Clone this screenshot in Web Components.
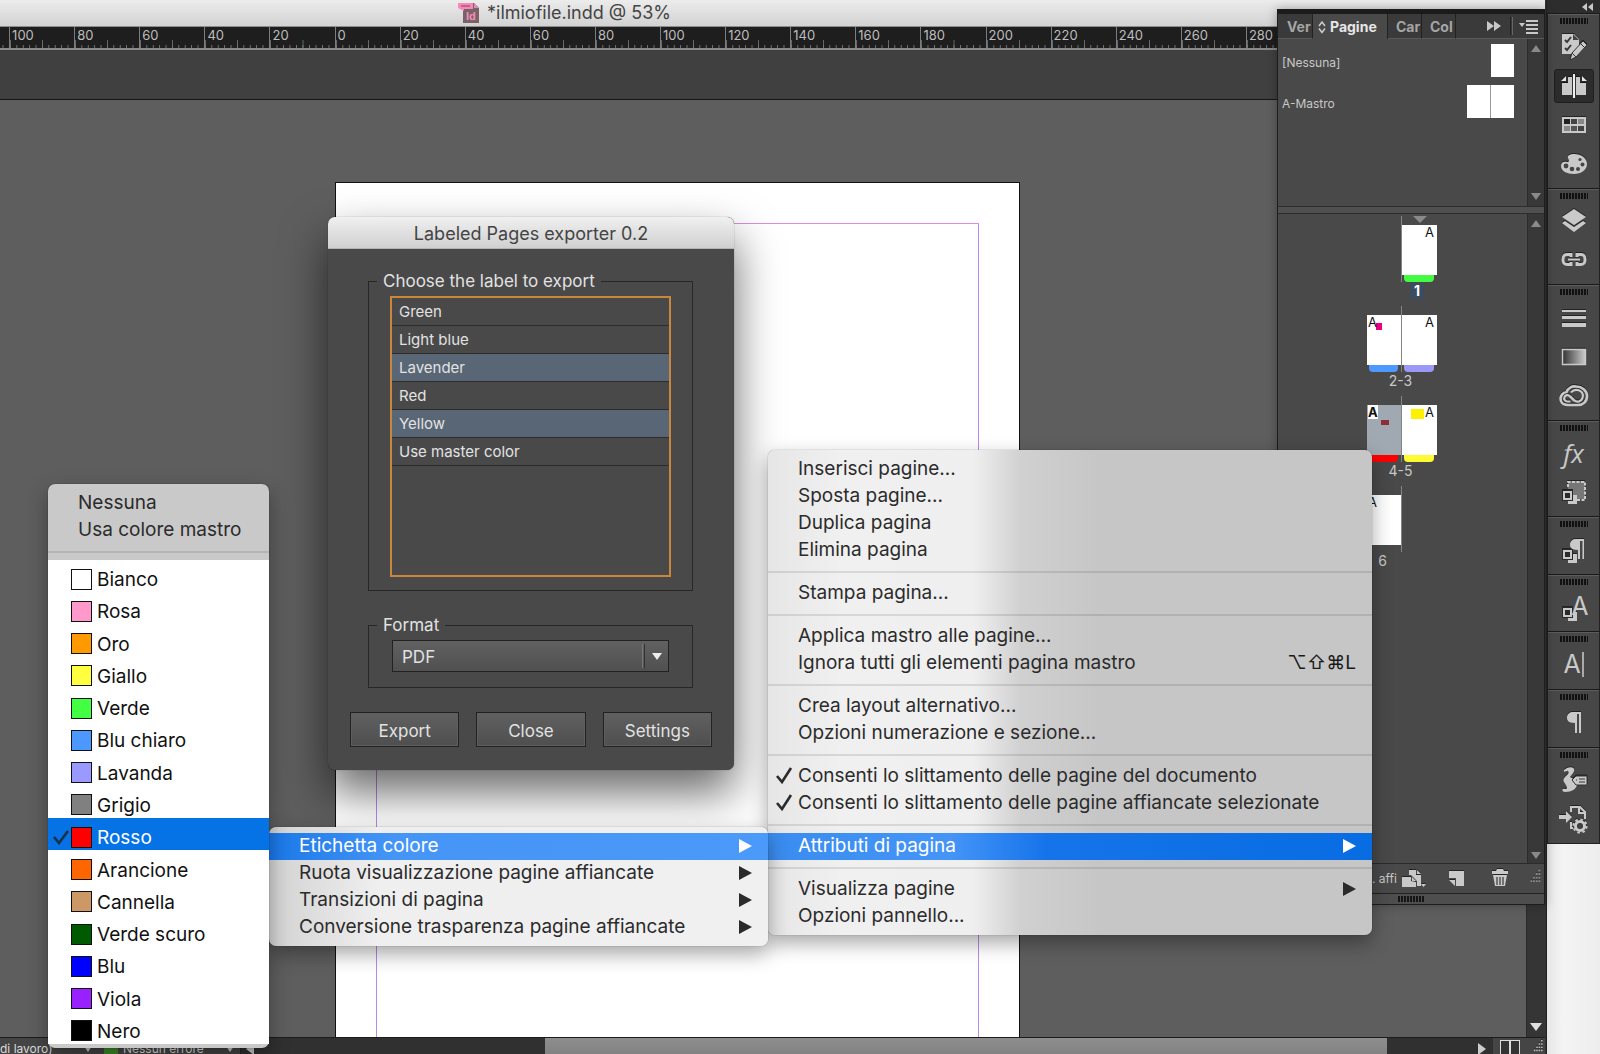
<!DOCTYPE html>
<html lang="it">
<head>
<meta charset="utf-8">
<title>ilmiofile.indd</title>
<style>
html,body{margin:0;height:100%;overflow:hidden;background:#5e5e5e}
body{font-family:Inter,"Liberation Sans",sans-serif}
</style>
</head>
<body>
<app-shell></app-shell>
<script>
const define = (name, html, init) => {
  const t = document.createElement('template');
  t.innerHTML = html;
  customElements.define(name, class extends HTMLElement {
    connectedCallback() {
      if (this.shadowRoot) return;
      this.attachShadow({mode: 'open'}).append(t.content.cloneNode(true));
      if (init) init(this, this.shadowRoot);
    }
  });
};

/* ---------- icons ---------- */
const G = 'fill="#c9c9c9"', S = 'fill="none" stroke="#c9c9c9"';
const linked = (x, y) => `<path ${G} d="M${x + 5} ${y + 4}h9v9h-9z"/><path fill="#2a2a2a" d="M${x - 1} ${y - 1}h11v11h-11z"/><path ${S} stroke-width="2" d="M${x + 1} ${y + 1}h7v7h-7z"/>`;
const ICONS = {
  preflight: `<path ${G} d="M3 2h12l5 5v15H3z"/><path fill="#444" d="M14 2v6h6z"/><path fill="none" stroke="#3a3a3a" stroke-width="2" d="M6 8l2 2 4-5M6 16l2 2 4-5"/><path ${G} stroke="#333" d="M24 9l4 4-11 12-6 3 2-7z"/><path stroke="#333" d="M22 12l4 4M13 21l4 4"/>`,
  pages: `<path ${G} d="M9 6h5v18H3V12h6zM21 6h-5v18h11V12h-6z"/><path fill="#e6e6e6" d="M7 5v5H2zM23 5v5h5z"/><path stroke="#333" stroke-width="4" d="M15 4v23"/><path stroke="#eee" stroke-width="2" d="M15 3v24"/>`,
  swatches: `<path ${G} d="M3 7h24v16H3z"/><path fill="#222" d="M5 9h6v5H5z"/><path fill="#444" d="M12 9h6v5h-6zM19 16h6v5h-6z"/><path fill="#888" d="M19 9h6v5h-6zM5 16h6v5H5z"/><path fill="#555" d="M12 16h6v5h-6z"/>`,
  color: `<path ${G} d="M15 5c7 0 13 4 13 10s-6 10-13 10S2 22 2 17c0-4 3-5 6-4 3 0 2-2 1-4-1-3 3-4 6-4z"/><g fill="#444"><circle cx="7" cy="17" r="2.4"/><circle cx="13" cy="20" r="2.3"/><circle cx="19" cy="20" r="2"/><circle cx="23.500" cy="15.500" r="2"/><circle cx="21" cy="10.500" r="1.600"/></g>`,
  layers: `<path ${G} d="M15 3l12 8-12 8-12-8z"/><path ${G} d="M3 17l3-2 9 6 9-6 3 2-12 9z"/>`,
  links: `<path ${S} stroke-width="3" d="M12 12v-2.500H8.500c-4 0-4.500 2-4.500 5s.5 5 4.500 5H12V17M18 12v-2.500h3.500c4 0 4.500 2 4.500 5s-.5 5-4.500 5H18V17"/><path ${S} stroke-width="2" d="M9 14.500h12"/>`,
  stroke: `<path ${G} d="M3 7h24v2H3zM3 13h24v3H3zM3 20h24v4H3z"/>`,
  gradient: `<defs><linearGradient id="g"><stop offset="0" stop-color="#333"/><stop offset="1" stop-color="#ccc"/></linearGradient></defs><path fill="url(#g)" stroke="#c9c9c9" stroke-width="1.500" d="M3.500 7.500h23v15h-23z"/>`,
  cc: `<path ${S} stroke-width="2.600" d="M9 24C3 24 1.500 20 1.500 17.500S4 11 7.500 11C9 7 13 5 17 5.500c6 0 11 4 11 9.500S24 24 19 24z"/><path ${S} stroke-width="2.200" d="M15.500 20l-5-5c-1.500-1.500-4-1-5 1s.5 4.500 3 4.500h3M12 11.500c2-3 7-3.500 10-1s2.500 8-2 10c-2 .5-3.500 0-5-1.500L11 15"/>`,
  object: `<path fill="#777" d="M9 4h17v18H14V12H9z"/><path ${S} stroke-width="2" stroke-dasharray="3 1.500" d="M9 10V5h17v18H15"/>${linked(4, 14)}`,
  parastyle: `<path ${G} d="M25 4v20h-1.600V6H21v18h-2V15c-7 0-8-3-8-5.500C11 6 14 4 17 4z"/>${linked(4, 15)}`,
  charbox: `${linked(4, 16)}`,
  para: `<path ${G} d="M22 5v21h-2V7h-2v19h-2V16c-7 0-8-3-8-5.500C8 7 11 5 14 5z"/>`,
  scripts: `<path ${G} d="M8 3c6-2 9 1 6 5l-3 4c4 3 8 2 7 8-1 4-5 7-12 7-4-1-3-4 0-3 4 0 1-4-1-7-3-5 7-7 4-11-1-1-5 3-4-1z"/><path ${G} stroke="#333" d="M13 15l4-4h11v9H17z"/><path stroke="#333" d="M20 14h6M20 17h6M17 15h1"/>`,
  data: `<path ${S} stroke-width="2" d="M12 8V3h9l5 5v7M12 18v6h2M20 3v6h6"/><path ${G} d="M0 11h7V7l6 6-6 6v-4H0z"/><circle cx="21" cy="22" r="4.500" fill="#333" stroke="#c9c9c9" stroke-width="3"/><circle cx="21" cy="22" r="6.600" fill="none" stroke="#c9c9c9" stroke-width="2" stroke-dasharray="2.600"/><circle cx="21" cy="22" r="2" fill="#444"/>`,
  grip: `<g fill="#b5b5b5"><path d="M25 5h2v2h-2zM22 9h2v2h-2zM25 9h2v2h-2zM19 13h2v2h-2zM22 13h2v2h-2zM25 13h2v2h-2zM16 17h2v2h-2zM19 17h2v2h-2zM22 17h2v2h-2zM25 17h2v2h-2z"/></g>`,
  pagesize: `<path ${G} d="M3 13h9v4l5 1v5H3zM10 6h7v5h5v11h-4v-5l-6-6h-2z"/><path ${G} d="M18 6l4 4h-4zM22 20h5l-2.500 3z"/><path ${G} d="M13 13l4 4h-4z"/>`,
  newpage: `<path ${G} d="M7 7h15v15h-8v-8H7z"/><path ${G} d="M7 16h6v6z"/>`,
  trash: `<path ${G} d="M11 7l1-2h6l1 2h4v3H7V7zM8 11h14l-2 11H10z"/><path stroke="#444" stroke-width="1.300" d="M12 13v8M15 13v8M18 13v8"/>`
};
customElements.define('ui-icon', class extends HTMLElement {
  connectedCallback() {
    if (this.shadowRoot) return;
    const n = this.getAttribute('name');
    this.attachShadow({mode: 'open'}).innerHTML =
      `<style>:host{display:block;width:30px;height:30px}svg{display:block;width:100%;height:100%;filter:drop-shadow(0 -1px 0 rgba(0,0,0,.5))}</style><svg viewBox="0 0 30 30" aria-hidden="true">${ICONS[n]}</svg>`;
  }
});

/* ---------- document window ---------- */
define('title-bar', `<style>
:host{display:flex;align-items:center;gap:7px;height:26px;padding-left:458px;border-bottom:1px solid #8d8d8d;background:linear-gradient(#ececec,#d2d2d2);color:#444;font-size:18px;line-height:24px}
svg{width:22px;height:24px;display:block}
text{font:bold 11px "Liberation Sans",sans-serif}
</style><svg viewBox="0 0 22 24" aria-hidden="true"><path fill="#7b6268" d="M5 2h11l5 5v15H5z"/><path fill="#d98fb0" d="M16 2l5 5h-5z"/><path fill="#f787b7" d="M0 2h15v6H6v2L0 7z"/><path fill="#c65f8b" d="M3 4h9v2H3z"/><text x="8" y="19" fill="#f58fbc">Id</text></svg><span><slot></slot></span>`);

define('ruler-bar', `<style>
:host{display:block;height:21px;overflow:hidden;background:#1e1e1e;border-bottom:2px solid #8a8a8a}
.scale{display:grid;grid-template-columns:repeat(21,1fr);width:1367px;height:21px;margin-left:-56px}
.scale span{border-left:1px solid #7c7c7c;padding-left:2px;font:13px/17px Inter,sans-serif;color:#bdbdbd;
background:linear-gradient(90deg,#777 1px,transparent 1px) 0 100%/10% 3px repeat-x,linear-gradient(90deg,#666 1px,transparent 1px) 0 100%/50% 8px repeat-x}
</style><div class="scale"></div>`, (el, r) => {
  const s = r.querySelector('.scale');
  for (let i = -6; i <= 14; i++) {
    const c = document.createElement('span');
    if (i > -6) c.textContent = Math.abs(i * 20);
    s.append(c);
  }
});

define('page-canvas', `<style>
:host{display:flex;min-height:0;background:#5e5e5e}
.board{flex:1;min-width:0;display:flex;padding:82px 0 0 335px}
.page{box-sizing:border-box;width:685px;background:#fff;border:1px solid #111;border-bottom:0;display:flex;padding:40px 40px 0}
.guide{flex:1;border:1px solid #b98be6;border-top-color:#df8be0;border-bottom:0}
.scroll{width:19px;border-left:1px solid #2a2a2a;background:#353535;display:flex;align-items:flex-end;justify-content:center;padding-bottom:6px;box-sizing:border-box}
.scroll i{border:6px solid transparent;border-top:8px solid #e0e0e0;border-bottom:0}
</style><div class="board"><div class="page"><div class="guide"></div></div></div><div class="scroll"><i></i></div>`);

define('status-bar', `<style>
:host{display:block;height:16px;overflow:hidden;background:#454545;border-top:1px solid #1c1c1c;font-size:12px;line-height:12px;color:#dcdcdc}
.row{display:flex;height:22px;align-items:center}
.info{width:241px;display:flex;align-items:center;box-sizing:border-box;border-right:1px solid #222;white-space:nowrap;height:22px}
.info span:first-child{width:84px}
.dn{border:4px solid transparent;border-top:6px solid #ccc;border-bottom:0}
.sq{width:14px;height:14px;margin:0 5px 0 12px;background:#3f8a2a}
.info .dn:last-child{margin-left:22px}
.track{flex:1;display:flex;height:22px;background:#303030;align-items:center}
.lt{border:6px solid transparent;border-right:8px solid #ccc;border-left:0;margin-left:5px}
.thumb{flex:1;height:22px;margin:0 0 0 291px;background:linear-gradient(#8e8e8e,#7e7e7e)}
.end{width:106px;display:flex;justify-content:flex-end}
.rt{border:6px solid transparent;border-left:8px solid #ccc;border-right:0;margin-right:7px}
.split{display:flex;width:52px;height:22px;background:#454545;align-items:flex-start}
.split b{width:8px;height:20px;border:1px solid #ddd;margin-top:2px;background:#333}
.split b:first-child{margin-left:7px}
ui-icon{margin:-2px 0 0 1px;width:24px;height:24px}
</style><div class="row"><div class="info"><span>di lavoro)</span><i class="dn"></i><i class="sq"></i><span>Nessun errore</span><i class="dn"></i></div><div class="track"><i class="lt"></i><div class="thumb"></div><div class="end"><i class="rt"></i></div></div><div class="split"><b></b><b></b><ui-icon name="grip"></ui-icon></div></div>`);

/* ---------- pages panel ---------- */
define('page-thumb', `<style>
:host{display:flex;flex-direction:column;font:13px/15px Inter,sans-serif;color:#111}
.sheet{height:50px;background:#fff;padding:0 3px;display:flex;justify-content:flex-end;box-sizing:border-box;position:relative}
:host([side=left]) .sheet{justify-content:flex-start;padding:0 1px}
:host([on]) .sheet{background:#a0a8b1;font-weight:bold}
:host([on]) .a{background:#fff;height:14px}
.bar{height:7px;margin:0 3px 0 2px;border-radius:0 0 4px 4px;background:var(--c,transparent)}
.art{position:absolute;display:none}
:host([art]) .art{display:block;background:var(--art);left:var(--ax);top:var(--ay);width:var(--aw);height:var(--ah)}
.a{position:relative}
</style><div class="sheet"><i class="art"></i><span class="a">A</span></div><div class="bar"></div>`);

define('page-spread', `<style>
:host{display:grid;grid-template-columns:34px 1px 35px;height:90px;grid-template-rows:9px 57px 24px;color:#c8c8c8;font:14px/17px Inter,sans-serif}
.spine{grid-area:1/2/3/3;background:#858585}
.l{grid-area:2/1}.r{grid-area:2/3}
.n{grid-area:3/1/4/4;text-align:center;padding-right:3px}
:host([only=right]) .n{grid-column:3;padding:0}
:host([only=left]) .n{grid-column:1}
:host([current]) .n{justify-self:start;text-align:center;margin-left:8px;align-self:start;margin-top:1px;width:14px;line-height:16px;font-weight:bold;font-size:14px;color:#fff;background:#3d4b61}
.mark{display:none;grid-area:1/3;justify-self:center;border:7px solid transparent;border-top:7px solid #8a8a8a;border-bottom:0;height:0}
:host([current]) .mark{display:block}
</style><i class="spine"></i><i class="mark"></i><div class="l"><slot name="l"></slot></div><div class="r"><slot name="r"></slot></div><div class="n"><slot></slot></div>`);

define('pages-panel', `<style>
:host{display:flex;flex-direction:column;box-sizing:border-box;width:268px;height:896px;background:#494949;border:1px solid #1d1d1d;border-top:5px solid #1b1b1b;box-shadow:0 0 10px rgba(0,0,0,.3);color:#c8c8c8}
*{box-sizing:border-box}
button{font:inherit;color:inherit;background:none;border:0;padding:0;margin:0}
.tabs{display:flex;height:25px;background:#3a3a3a;font-weight:bold;font-size:14px;color:#a5a5a5}
.tabs button{border-right:1px solid #222;border-bottom:1px solid #5a5a5a;text-align:left;overflow:hidden}
.v{width:35px;padding-left:9px}.c{width:34px;padding-left:8px}
.tabs .on{width:75px;background:#494949;border-bottom:0;color:#e6e6e6;display:flex;align-items:center;gap:4px;padding-left:5px}
.more{flex:1;border-bottom:1px solid #5a5a5a;display:flex;align-items:center;justify-content:flex-end;padding-right:5px}
.masters{display:flex;height:167px}
.body{flex:1;min-width:0}
.masters .body{padding-top:1px}
.m{display:flex;justify-content:space-between;align-items:center;height:41px;padding:0 13px 0 4px;font-size:12px}
.m span{padding-top:3px}
.m div{display:flex;gap:1px;background:#999}
.m i{display:block;width:23px;height:33px;background:#fff}
.sb{width:17px;background:#383838;border-left:1px solid #2c2c2c;display:flex;flex-direction:column;justify-content:space-between;align-items:center;padding:6px 0}
.pages .sb{padding-bottom:4px}
.up,.dn{border:5px solid transparent}
.up{border-bottom:7px solid #8a8a8a;border-top:0}.dn{border-top:7px solid #8a8a8a;border-bottom:0}
.split{height:8px;background:#505050;border-top:1px solid #2d2d2d;border-bottom:1px solid #2d2d2d}
.pages{display:flex;flex:1}
.list{display:flex;flex-direction:column;padding:2px 0 0 89px}
.foot{display:flex;align-items:center;height:30px;border-top:1px solid #2b2b2b;padding-left:94px;font-size:12px;white-space:nowrap}
.foot .t{width:27px}
.foot button{margin-right:13px}
.foot ui-icon[name=grip]{margin-left:-12px;opacity:.6;width:27px;height:27px}
.grip{height:11px;border-top:1px solid #222;background:#4e4e4e;display:flex;justify-content:center;align-items:center}
.grip i{width:27px;height:6px;background:repeating-linear-gradient(90deg,#151515 0 2px,#4e4e4e 2px 3px)}
</style>
<div class="tabs"><button class="v">Ver</button><button class="on"><svg width="8" height="14" viewBox="0 0 8 14" fill="none" stroke="#ccc" stroke-width="1.500" aria-hidden="true"><path d="M1 6l3-4 3 4M1 8.500l3 4 3-4"/></svg>Pagine</button><button class="c">Car</button><button class="c">Col</button>
<div class="more"><svg width="52" height="18" viewBox="0 0 52 18" aria-hidden="true"><path fill="#c9c9c9" d="M0 4l7 5-7 5zM7 4l7 5-7 5z"/><path stroke="#222" d="M23.500 0v18"/><path stroke="#666" d="M25.500 0v18"/><path fill="#c9c9c9" d="M32 6h6l-3 4zM39 3h12v2H39zM39 7h12v2H39zM39 11h12v2H39zM39 15h12v2H39z"/></svg></div></div>
<div class="masters"><div class="body"><div class="m"><span>[Nessuna]</span><div><i></i></div></div><div class="m"><span>A-Mastro</span><div><i></i><i></i></div></div></div><div class="sb"><i class="up"></i><i class="dn"></i></div></div>
<div class="split"></div>
<div class="pages"><div class="body"><div class="list">
<page-spread only="right" current><page-thumb slot="r" style="--c:#44fb44"></page-thumb>1</page-spread>
<page-spread><page-thumb slot="l" side="left" art style="--c:#4d99ff;--art:#e6007e;--ax:9px;--ay:8px;--aw:6px;--ah:7px"></page-thumb><page-thumb slot="r" style="--c:#9c98f8"></page-thumb>2-3</page-spread>
<page-spread><page-thumb slot="l" side="left" on art style="--c:#fb0000;--art:#8d2f36;--ax:14px;--ay:15px;--aw:8px;--ah:5px"></page-thumb><page-thumb slot="r" art style="--c:#fffb33;--art:#fff000;--ax:9px;--ay:4px;--aw:13px;--ah:10px"></page-thumb>4-5</page-spread>
<page-spread only="left"><page-thumb slot="l" side="left"></page-thumb>6</page-spread>
</div></div><div class="sb"><i class="up"></i><i class="dn"></i></div></div>
<div class="foot"><span class="t">. affi</span><button aria-label="Modifica dimensioni pagina"><ui-icon name="pagesize"></ui-icon></button><button aria-label="Nuova pagina"><ui-icon name="newpage"></ui-icon></button><button aria-label="Elimina pagina"><ui-icon name="trash"></ui-icon></button><ui-icon name="grip"></ui-icon></div>
<div class="grip"><i></i></div>`);

/* ---------- icon dock ---------- */
define('dock-group', `<style>
:host{display:block;flex:1 1 auto;border:1px solid #222;border-top-color:#1a1a1a;border-bottom:0;background:#474747;box-shadow:inset 0 1px 0 #5c5c5c;padding-bottom:4px;box-sizing:border-box}
.grip{width:28px;height:6px;margin:4px auto 3px;background:repeating-linear-gradient(90deg,#111 0 2px,#474747 2px 3px)}
</style><div class="grip"></div><slot></slot>`);
define('dock-button', `<style>
:host{display:flex;height:39px;align-items:center;justify-content:center}
button{width:40px;height:34px;padding:0;border:1px solid transparent;border-radius:3px;background:none;display:flex;align-items:center;justify-content:center;color:#c9c9c9;font:28px/30px Inter,sans-serif}
:host([on]) button{background:#2c2c2c;border-color:#1f1f1f}
::slotted(em){font:italic 26px/26px "Open Sans",sans-serif}
</style><button><slot></slot></button>`, (el, r) => r.querySelector('button').setAttribute('aria-label', el.getAttribute('label')));
define('icon-dock', `<style>
:host{display:flex;flex-direction:column;background:linear-gradient(90deg,#e6e6e6,#f4f4f4 30%,#ededed);border-left:1px solid #222;box-sizing:border-box}
.head{height:13px;background:#2d2d2d;display:flex;justify-content:flex-end;align-items:center;padding-right:6px}
.groups{display:flex;flex-direction:column;min-height:830px;border-bottom:1px solid #222}
.st{position:relative;display:block;width:30px;height:30px}
.st b{position:absolute;right:0;top:1px;font:25px/26px Inter,sans-serif}
.cur{border-right:2px solid #aaa;font:25px/25px Inter,sans-serif;padding-right:1px}
</style><div class="head"><svg width="12" height="8" viewBox="0 0 12 8" fill="#c9c9c9" aria-hidden="true"><path d="M5 0v8L0 4zM11 0v8L6 4z"/></svg></div>
<div class="groups">
<dock-group><dock-button label="Verifica preliminare"><ui-icon name="preflight"></ui-icon></dock-button><dock-button label="Pagine" on><ui-icon name="pages"></ui-icon></dock-button><dock-button label="Campioni"><ui-icon name="swatches"></ui-icon></dock-button><dock-button label="Colore"><ui-icon name="color"></ui-icon></dock-button></dock-group>
<dock-group><dock-button label="Livelli"><ui-icon name="layers"></ui-icon></dock-button><dock-button label="Collegamenti"><ui-icon name="links"></ui-icon></dock-button></dock-group>
<dock-group><dock-button label="Traccia"><ui-icon name="stroke"></ui-icon></dock-button><dock-button label="Sfumatura"><ui-icon name="gradient"></ui-icon></dock-button><dock-button label="Librerie"><ui-icon name="cc"></ui-icon></dock-button></dock-group>
<dock-group><dock-button label="Effetti"><em>fx</em></dock-button><dock-button label="Stili oggetto"><ui-icon name="object"></ui-icon></dock-button></dock-group>
<dock-group><dock-button label="Stili di paragrafo"><ui-icon name="parastyle"></ui-icon></dock-button></dock-group>
<dock-group><dock-button label="Stili di carattere"><span class="st"><ui-icon name="charbox"></ui-icon><b>A</b></span></dock-button></dock-group>
<dock-group><dock-button label="Carattere"><span class="cur">A</span></dock-button></dock-group>
<dock-group><dock-button label="Paragrafo"><ui-icon name="para"></ui-icon></dock-button></dock-group>
<dock-group><dock-button label="Script"><ui-icon name="scripts"></ui-icon></dock-button><dock-button label="Unione dati"><ui-icon name="data"></ui-icon></dock-button></dock-group>
</div>`);

/* ---------- export dialog ---------- */
define('list-option', `<style>
:host{display:block}
label{display:block;height:27px;padding-left:7px;border-bottom:1px solid #2c2c2c;font-size:15px;line-height:27px;color:#e2e2e2;position:relative}
:host([checked]) label{background:#596675}
input{position:absolute;opacity:0;margin:0;width:100%;height:100%;left:0}
</style><label><input type="checkbox"><slot></slot></label>`, (el, r) => { r.querySelector('input').checked = el.hasAttribute('checked'); });

define('export-dialog', `<style>
:host{display:flex;flex-direction:column;box-sizing:border-box;width:406px;height:553px;border-radius:7px;background:#494949;box-shadow:0 22px 46px rgba(0,0,0,.6),0 0 1px rgba(0,0,0,.6);color:#e2e2e2}
*{box-sizing:border-box}
h1{margin:0;height:32px;border-radius:7px 7px 0 0;background:linear-gradient(#f0f0f0,#d0d0d0);border-bottom:1px solid #b5b5b5;font-weight:400;font-size:18px;line-height:30px;padding-top:2px;text-align:center;color:#444}
form{display:flex;flex-direction:column;padding:22px 22px 0}
fieldset{margin:0 19px 24px 18px;padding:5px 21px 13px;border:1px solid #272727;min-width:0}
legend{font-size:17px;line-height:20px;padding:0 6px;margin-left:-13px}
.list{height:281px;border:2px solid #c8873c}
.sel{position:relative;display:block;margin:0 2px}
select{appearance:none;width:100%;height:32px;border:1px solid #222;border-radius:0;background:linear-gradient(#616161,#505050);color:#e2e2e2;font:17px Inter,sans-serif;padding:2px 9px 0;display:block}
.sel svg{position:absolute;right:0;top:0;pointer-events:none}
fieldset:nth-of-type(2){padding-bottom:15px}
.btns{display:flex;gap:17px}
button{flex:1;height:35px;border:1px solid #222;background:linear-gradient(#606060,#4f4f4f);box-shadow:inset 0 0 0 1px #5e5e5e;color:#e2e2e2;font:17px Inter,sans-serif;padding:2px 0 0}
</style><h1>Labeled Pages exporter 0.2</h1>
<form><fieldset><legend>Choose the label to export</legend><div class="list">
<list-option>Green</list-option><list-option>Light blue</list-option><list-option checked>Lavender</list-option><list-option>Red</list-option><list-option checked>Yellow</list-option><list-option>Use master color</list-option></div></fieldset>
<fieldset><legend>Format</legend><div class="sel"><select aria-label="Format"><option>PDF</option></select><svg width="28" height="32" viewBox="0 0 28 32" aria-hidden="true"><path stroke="#777" d="M1.500 4v24"/><path stroke="#333" d="M3.500 4v24"/><path fill="#eee" d="M11 13h10l-5 7z"/></svg></div></fieldset>
<div class="btns"><button type="button">Export</button><button type="button">Close</button><button type="button">Settings</button></div></form>`);

/* ---------- menus ---------- */
define('menu-item', `<style>
:host{display:block}
button{display:flex;align-items:center;width:100%;height:27px;border:0;margin:0;padding:0 16px 1px 30px;background:none;font:19px/26px Inter,sans-serif;color:#2b2b2b;text-align:left;white-space:nowrap;position:relative}
.l{flex:1}
.k{color:#1a1a1a}
.arrow{display:none;border:7px solid transparent;border-left:13px solid #2b2b2b;border-right:0}
:host([sub]) .arrow{display:block}
:host([on]) button{background:var(--hi);color:#fff}
:host([on]) .arrow{border-left-color:#fff}
svg{display:none;position:absolute;left:7px;top:4px}
:host([checked]) svg{display:block}
</style><button role="menuitem"><svg width="18" height="17" viewBox="0 0 18 17" fill="none" stroke="#2b2b2b" stroke-width="2.600" aria-hidden="true"><path d="M2 9l5 6 9-14"/></svg><span class="l"><slot></slot></span><span class="k"><slot name="key"></slot></span><i class="arrow"></i></button>`);
define('menu-line', `<style>:host{display:flex;height:16px;align-items:center}i{flex:1;height:2px;background:rgba(0,0,0,.1)}</style><i></i>`);
define('context-menu', `<style>
:host{display:block;box-sizing:border-box;padding:6px 0 5px;border-radius:7px;background:var(--bg);box-shadow:0 8px 20px rgba(0,0,0,.35),0 0 1px rgba(0,0,0,.6)}
</style><slot></slot>`);

define('color-row', `<style>
:host{display:block;flex:1 1 0;min-height:0}
button{display:flex;align-items:center;box-sizing:border-box;width:100%;height:100%;border:0;padding:6px 0 0;background:none;text-align:left;font:19px/22px Inter,sans-serif;color:#111}
:host([on]) button{background:#0572e6;color:#fff}
i{width:21px;height:21px;box-sizing:border-box;border:1px solid #111;background:var(--c);margin-right:5px}
span{padding-top:2px}
svg{width:18px;height:16px;margin:0 1px 0 4px;visibility:hidden}
:host([on]) svg{visibility:visible}
</style><button role="menuitem"><svg viewBox="0 0 18 16" fill="none" stroke="#1c3048" stroke-width="2.600" aria-hidden="true"><path d="M2 8l5 6 9-12"/></svg><i></i><span><slot></slot></span></button>`);
define('color-menu', `<style>
:host{display:flex;flex-direction:column;box-sizing:border-box;width:221px;height:564px;border-radius:7px;background:#c9c9c9;box-shadow:0 8px 20px rgba(0,0,0,.35),0 0 1px rgba(0,0,0,.6);padding:6px 0 4px}
.rows{flex:1;display:flex;flex-direction:column;background:#fff;min-height:0}
</style><menu-item>Nessuna</menu-item><menu-item>Usa colore mastro</menu-item><menu-line></menu-line><div class="rows"></div>`, (el, r) => {
  const rows = r.querySelector('.rows');
  for (const [n, c] of [['Bianco','#fff'],['Rosa','#ff99cc'],['Oro','#ff9900'],['Giallo','#ffff3f'],['Verde','#43ff43'],['Blu chiaro','#4b99ff'],['Lavanda','#9999ff'],['Grigio','#808080'],['Rosso','#ff0000'],['Arancione','#ff6600'],['Cannella','#cc9966'],['Verde scuro','#005a00'],['Blu','#0000ff'],['Viola','#9920ff'],['Nero','#000']]) {
    const e = document.createElement('color-row');
    e.textContent = n;
    e.style.setProperty('--c', c);
    if (n === 'Rosso') e.setAttribute('on', '');
    rows.append(e);
  }
});

/* ---------- whole application ---------- */
define('app-shell', `<style>
:host{display:grid;grid-template-columns:1fr 54px;height:100vh;position:relative;overflow:hidden}
.doc{display:grid;grid-template-rows:auto auto 50px 1fr auto;min-width:0;min-height:0;border-right:1px solid #333}
.bar{background:#404040;border-bottom:1px solid #161616}
pages-panel{position:absolute;right:55px;top:9px}
export-dialog{position:absolute;left:328px;top:217px}
color-menu{position:absolute;left:48px;top:484px}
.sub{position:absolute;left:269px;top:827px;width:499px;--bg:linear-gradient(90deg,#d2d2d2,#efefef 22%,#f0f0f0);--hi:linear-gradient(90deg,#1a78e8,#4595f7 25%,#4b99f8)}
.main{position:absolute;left:768px;top:450px;width:604px;--bg:linear-gradient(90deg,#e6e6e6,#f0f0f0 12%,#efefef 34%,#d0d0d0 42%,#c6c6c6 55%);--hi:linear-gradient(90deg,#3a8cf0,#4595f7 30%,#1674ea 46%,#086ce2)}
</style>
<div class="doc"><title-bar>*ilmiofile.indd @ 53%</title-bar><ruler-bar></ruler-bar><div class="bar"></div><page-canvas></page-canvas><status-bar></status-bar></div>
<icon-dock></icon-dock>
<pages-panel></pages-panel>
<export-dialog></export-dialog>
<context-menu class="main" role="menu">
<menu-item>Inserisci pagine...</menu-item><menu-item>Sposta pagine...</menu-item><menu-item>Duplica pagina</menu-item><menu-item>Elimina pagina</menu-item><menu-line></menu-line>
<menu-item>Stampa pagina...</menu-item><menu-line></menu-line>
<menu-item>Applica mastro alle pagine...</menu-item><menu-item>Ignora tutti gli elementi pagina mastro<span slot="key">⌥⇧⌘L</span></menu-item><menu-line></menu-line>
<menu-item>Crea layout alternativo...</menu-item><menu-item>Opzioni numerazione e sezione...</menu-item><menu-line></menu-line>
<menu-item checked>Consenti lo slittamento delle pagine del documento</menu-item><menu-item checked>Consenti lo slittamento delle pagine affiancate selezionate</menu-item><menu-line></menu-line>
<menu-item sub on>Attributi di pagina</menu-item><menu-line></menu-line>
<menu-item sub>Visualizza pagine</menu-item><menu-item>Opzioni pannello...</menu-item>
</context-menu>
<context-menu class="sub" role="menu">
<menu-item sub on>Etichetta colore</menu-item><menu-item sub>Ruota visualizzazione pagine affiancate</menu-item><menu-item sub>Transizioni di pagina</menu-item><menu-item sub>Conversione trasparenza pagine affiancate</menu-item>
</context-menu>
<color-menu></color-menu>`);
</script>
</body>
</html>
